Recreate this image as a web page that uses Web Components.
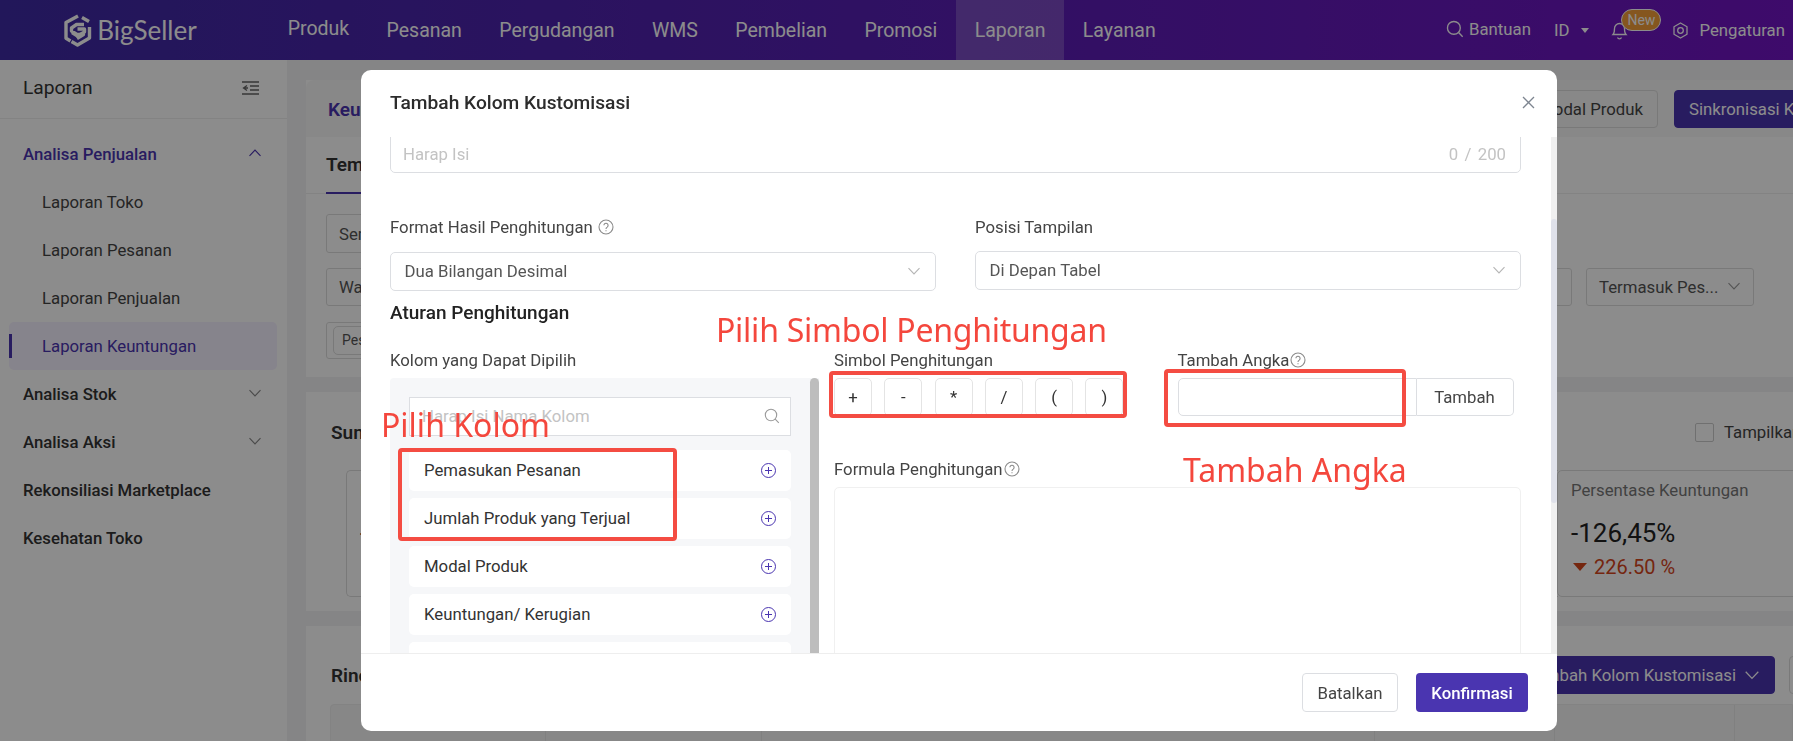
<!DOCTYPE html>
<html lang="id"><head><meta charset="utf-8"><title>BigSeller</title>
<style>
html,body{margin:0;height:100%;overflow:hidden;font-family:Roboto,"Liberation Sans",sans-serif;background:#f2f3f5}
</style></head><body>
<app-shell></app-shell>
<script>
const I={
 chev:(s=14,c='#b5b5b5')=>`<svg width="${s}" height="${s}" viewBox="0 0 14 14" fill="none" stroke="${c}" stroke-width="1.1"><path d="M1.5 4.2 7 10l5.5-5.8"/></svg>`,
 up:(s=14,c='#4a33b0')=>`<svg width="${s}" height="${s}" viewBox="0 0 14 14" fill="none" stroke="${c}" stroke-width="1.1"><path d="M1.5 9.8 7 4l5.5 5.8"/></svg>`,
 help:(s=16)=>`<svg width="${s}" height="${s}" viewBox="0 0 16 16" fill="none" stroke="#8b8b8b" stroke-width="1.1"><circle cx="8" cy="8" r="7"/><path d="M5.9 6.3a2.1 2.1 0 1 1 3.3 1.8c-.8.5-1.2.9-1.2 1.8"/><path d="M8 11.2v1.1"/></svg>`,
 search:(s=16,c='#999',w=1.2)=>`<svg width="${s}" height="${s}" viewBox="0 0 16 16" fill="none" stroke="${c}" stroke-width="${w}"><circle cx="7" cy="7" r="5.7"/><path d="m11.2 11.2 3.6 3.6"/></svg>`,
 plus:`<svg width="15" height="15" viewBox="0 0 15 15" fill="none" stroke="#4a35b0" stroke-width="1"><circle cx="7.5" cy="7.5" r="7"/><path d="M7.5 4v7M4 7.5h7"/></svg>`
};
const def=(name,html)=>customElements.define(name,class extends HTMLElement{constructor(){super();this.attachShadow({mode:'open'}).innerHTML=html}});

def('app-logo',`<style>:host{display:flex;align-items:center;gap:5px;color:#fff;font:400 26px Lato,Roboto,sans-serif}</style>
<svg width="29" height="33" viewBox="0 0 29 33" fill="none" stroke="#fff" stroke-width="3.4" stroke-linejoin="round"><path d="M15 2 3 8.6v15.6L7.5 27"/><path d="M19 3.5l7 4M26.5 13v11L14.5 31l-6-3.5"/><path d="M21 10.5h-7.5L8.5 14v3l5.500 3.500h6.500l-6.500 4"/><path d="M9 18.500l5.500 3.500 7-4v-3h-7"/></svg>
<span>BigSeller</span>`);

def('nav-item',`<style>:host{display:flex;align-items:center;height:60px;padding:0 18.700px;font-size:19.5px;color:#fff;box-sizing:border-box;white-space:nowrap}
:host([active]){background:rgba(255,255,255,.2)}span{position:relative;top:var(--dy,0)}</style><span><slot></slot></span>`);

def('app-header',`<style>:host{display:flex;align-items:center;height:60px;background:linear-gradient(90deg,#3e2aa4,#7114c3);color:#fff}
.logo{width:269px;display:flex;justify-content:center;padding-right:9px;box-sizing:border-box}
.nav{display:flex}.r{margin-left:auto;display:flex;align-items:center;font-size:16.75px;height:60px;white-space:nowrap;margin-right:8px}
.i{display:flex;align-items:center;gap:5px}.bell{position:relative;width:17px;height:20px;margin:0 44px 0 22px}
.new{position:absolute;left:10px;top:-11px;background:#f29d3a;border:1px solid #fff;border-radius:11px;font-size:14px;line-height:20px;padding:0 5px;height:22px;box-sizing:border-box}
.tri{display:inline-block;border:4px solid transparent;border-top:5px solid #fff;margin:5px 0 0 7px}
</style><div class="logo"><app-logo></app-logo></div>
<div class="nav"><nav-item style="--dy:-2px">Produk</nav-item><nav-item>Pesanan</nav-item><nav-item>Pergudangan</nav-item><nav-item>WMS</nav-item><nav-item>Pembelian</nav-item><nav-item>Promosi</nav-item><nav-item active>Laporan</nav-item><nav-item>Layanan</nav-item></div>
<div class="r"><span class="i" style="position:relative;top:-1px">${I.search(18,'#fff',1.2)}Bantuan</span><span class="i" style="margin-left:23px">ID<i class="tri"></i></span>
<span class="bell"><svg width="17" height="20" viewBox="0 0 17 20" fill="none" stroke="#fff" stroke-width="1.3"><path d="M2 14.500c1.500-1.500 1.500-3 1.500-6a5 5 0 0 1 10 0c0 3 0 4.500 1.500 6z"/><path d="M6.500 17.500a2.200 2.200 0 0 0 4 0"/></svg><span class="new">New</span></span>
<span class="i" style="gap:10px">${`<svg width="17" height="17" viewBox="0 0 17 17" fill="none" stroke="#fff" stroke-width="1.3" stroke-linejoin="round"><path d="M8.500 1 15 4.750v7.500L8.500 16 2 12.250v-7.500z"/><circle cx="8.500" cy="8.500" r="2.800"/></svg>`}Pengaturan</span></div>`);

def('side-item',`<style>:host{display:flex;align-items:center;height:48px;padding:0 25px 0 23px;font-size:16.75px;color:#333;font-weight:500;box-sizing:border-box;white-space:nowrap;justify-content:space-between}
:host([sub]){font-weight:400;padding-left:42px;color:#444}:host([open]){color:#4a33b0}
:host([active]){font-weight:400;color:#4a33b0;background:#f5f0ff;margin:0 10px 0 9px;padding-left:33px;border-radius:5px;position:relative}
:host([active])::before{content:"";position:absolute;left:0;top:12px;bottom:12px;width:3px;background:#4a33b0}</style><slot></slot><slot name="i"></slot>`);

def('side-nav',`<style>:host{display:block;width:287px;flex:none;background:#fff;height:681px}
.t{height:59px;display:flex;align-items:center;justify-content:space-between;padding:0 27px 3px 23px;font-size:19.2px;color:#333;border-bottom:1px solid #eee;box-sizing:border-box}
.m{padding-top:11px;display:block}</style>
<div class="t">Laporan<svg width="18" height="14" viewBox="0 0 18 14" fill="none" stroke="#666" stroke-width="1.300"><path d="M0 1h17M8 5h9M8 9h9M0 13h17"/><path d="M5 4.500 1.500 7 5 9.500M1.500 7H6"/></svg></div>
<div class="m"><side-item open>Analisa Penjualan<span slot="i">${I.up(14,'#4a33b0')}</span></side-item>
<side-item sub>Laporan Toko</side-item><side-item sub>Laporan Pesanan</side-item><side-item sub>Laporan Penjualan</side-item><side-item sub active>Laporan Keuntungan</side-item>
<side-item>Analisa Stok<span slot="i">${I.chev(14,'#888')}</span></side-item><side-item>Analisa Aksi<span slot="i">${I.chev(14,'#888')}</span></side-item><side-item>Rekonsiliasi Marketplace</side-item><side-item>Kesehatan Toko</side-item></div>`);

def('bg-box',`<style>:host{display:flex;align-items:center;justify-content:space-between;height:39px;border:1px solid #ddd;border-radius:3px;box-sizing:border-box;padding:0 12px;font-size:16.75px;color:#555;white-space:nowrap;overflow:hidden}</style><slot></slot><slot name="i"></slot>`);

def('report-page',`<style>:host{display:block;flex:1;min-width:0;height:681px;overflow:hidden;padding:20px 0 0 19px;box-sizing:border-box;background:#f2f3f5}
.card{background:#fff;margin-bottom:15px;overflow:hidden;position:relative}
.top{height:57px;background:#f8f8f8;display:flex;align-items:center;padding:0 0 0 22px;border-radius:8px 0 0 0;gap:16px}
.ttl{color:#4a33b0;font-weight:600;font-size:19px;margin-right:auto;position:relative;top:1px}
.btn{height:38px;display:flex;align-items:center;border:1px solid #ddd;border-radius:4px;padding:0 14px;font-size:16.75px;color:#444;box-sizing:border-box;white-space:nowrap}
.pri{background:#4a33b0;border-color:#4a33b0;color:#fff}
.tab{display:flex;height:57px;border-bottom:1px solid #eee;padding-left:20px;box-sizing:border-box}
.tab b{font-size:19px;font-weight:600;color:#333;line-height:56px;border-bottom:2px solid #4a33b0;height:55px;width:130px}
.f{padding:20px 39px 20px 20px;height:183px;box-sizing:border-box}
.fr{display:flex;gap:14px;margin-top:15px}.fr bg-box{width:168px}
.tag{width:200px;height:37px;border:1px solid #ddd;border-radius:3px;padding:3px 6px;box-sizing:border-box;margin-top:16px}
.tag span{display:inline-block;border:1px solid #ddd;border-radius:5px;height:29px;line-height:27px;padding:0 8px;box-sizing:border-box;font-size:14px;color:#555}
h3{margin:0;font-size:19px;font-weight:600;color:#333}
.s{height:219px;padding:30px 0 0 25px;box-sizing:border-box}
.hr{display:flex;justify-content:space-between;align-items:center;height:20px}
.chk{display:flex;align-items:center;gap:10px;font-size:16.75px;color:#444;width:98px;white-space:nowrap}
.chk i{width:19px;height:19px;border:1px solid #ccc;border-radius:2px;box-sizing:border-box;flex:none}
.st{display:flex;margin:28px 0 0 15px;height:127px}
.bx{border:1px solid #ddd;border-radius:5px 0 0 5px;box-sizing:border-box;padding:9px 13px;flex:0 0 260px;height:127px;margin-right:-24px;margin-left:-1px}
.bx:first-child{flex:1;margin:0;border-right:0}
.lb{font-size:16.75px;color:#777;line-height:20px}.v{font-size:26px;color:#222;line-height:28px;margin-top:19px}.d{display:flex;align-items:center;gap:7px;font-size:20px;color:#d5451b;margin-top:6px;line-height:28px}
.d i{border:7px solid transparent;border-top:8px solid #d5451b;border-bottom:0;margin-left:2px}
.r .hr{height:38px;margin-top:-2px}.r{padding:32px 0 0 25px;height:140px;box-sizing:border-box}
.tb{display:flex;height:60px;margin:10px 0 0 -1px;background:#f6f6f6;border:1px solid #eee;border-radius:4px 0 0 0;box-sizing:border-box}
.tb i{border-right:1px solid #e9e9e9;flex:none;box-sizing:border-box}
</style>
<div class="card"><div class="top"><span class="ttl">Keuntungan</span><span class="btn">Modal Produk</span><span class="btn pri" style="width:219px;margin-right:-100px">Sinkronisasi Keuntungan</span></div>
<div class="tab"><b>Template</b></div>
<div class="f"><bg-box style="width:200px">Semua</bg-box>
<div class="fr"><bg-box style="width:1246px;height:38px">Waktu</bg-box><bg-box style="height:38px">Termasuk Pes...<span slot="i">${I.chev(14,'#999')}</span></bg-box></div>
<div class="tag"><span>Pesanan</span></div></div></div>
<div class="card"><div class="s"><div class="hr"><h3>Summary</h3><span class="chk"><i></i>Tampilkan</span></div>
<div class="st"><div class="bx"><div class="lb">Pemasukan</div><div class="v">-</div></div><div class="bx"><div class="lb">Persentase Keuntungan</div><div class="v">-126,45%</div><div class="d"><i></i>226.50 %</div></div></div></div></div>
<div class="card" style="margin:0"><div class="r"><div class="hr"><h3>Rincian</h3><span style="display:flex;gap:14px;margin-right:-26px"><span class="btn pri" style="gap:8px">Tambah Kolom Kustomisasi ${I.chev(16,'#fff')}</span><span class="btn" style="width:30px"></span></span></div>
<div class="tb"><i style="width:215px"></i><i style="width:216px"></i><i style="width:613px"></i><i style="width:180px"></i><i style="width:180px"></i></div></div></div>`);

def('field-box',`<style>:host{display:flex;align-items:center;justify-content:space-between;height:39px;border:1px solid #dcdee2;border-radius:5px;box-sizing:border-box;padding:0 14px 2px 12px;font-size:16.75px;background:#fff;color:#555;white-space:nowrap}
:host([ph]){color:#c3c3c3}:host([sel]){padding-left:13.5px}::slotted([slot=i]){display:flex}</style><slot></slot><slot name="i"></slot>`);

def('col-row',`<style>:host{display:flex;align-items:center;justify-content:space-between;height:41px;background:#fff;border-radius:5px;padding:0 15px 0;font-size:16.75px;color:#333;white-space:nowrap;margin-bottom:7px;flex:none;line-height:39px}::slotted(span){display:flex}</style><slot></slot><slot name="i"></slot>`);

def('sym-btn',`<style>:host{display:flex;align-items:center;justify-content:center;width:38px;height:38px;border:1px solid #e4e4e4;border-radius:5px;box-sizing:border-box;font-size:16.75px;color:#333}</style><slot></slot>`);

def('col-panel',`<style>:host{display:flex;width:429px;height:420px;background:#f6f7f9;border-radius:4px 0 0 0;overflow:hidden}
.l{flex:1;padding:19px 19px 0;min-width:0;display:flex;flex-direction:column}
.sb{width:9px;background:#bdbdbd;border-radius:5px 5px 0 0;flex:none}
field-box{border-radius:0;margin-bottom:14px;flex:none;padding-right:10px}</style>
<div class="l"><field-box ph>Harap Isi Nama Kolom<span slot="i">${I.search(16,'#9a9a9a',1.1)}</span></field-box>
<col-row>Pemasukan Pesanan<span slot="i">${I.plus}</span></col-row><col-row>Jumlah Produk yang Terjual<span slot="i">${I.plus}</span></col-row><col-row>Modal Produk<span slot="i">${I.plus}</span></col-row><col-row>Keuntungan/ Kerugian<span slot="i">${I.plus}</span></col-row><col-row></col-row></div><div class="sb"></div>`);

def('custom-dialog',`<style>:host{position:fixed;left:361px;top:70px;width:1196px;height:661px;background:#fff;border-radius:10px;display:flex;flex-direction:column;overflow:hidden;color:#333;font-size:16.75px}
.h{height:67px;flex:none;display:flex;align-items:center;justify-content:space-between;padding:0 22px 3px 29px;box-sizing:border-box;font-size:19.2px;font-weight:500;color:#2c2c2c}
.main{flex:1;min-height:0;display:flex}
.b{flex:1;overflow:hidden;padding:0 30px 0 29px;min-width:0}
.scr{width:6px;background:#f0f0f0;flex:none}.scr i{display:block;width:6px;height:284px;margin-top:82px;background:#dfe1ea;border-radius:3px}
.ft{height:78px;flex:none;border-top:1px solid #eee;box-sizing:border-box;display:flex;align-items:center;justify-content:flex-end;gap:18px;padding:0 29px 0 0}
.btn{height:39px;display:flex;align-items:center;justify-content:center;border-radius:4px;box-sizing:border-box;font-size:16.75px}
.c{width:96px;border:1px solid #dcdee2;color:#444}.o{width:112px;background:#4a35b0;color:#fff;font-weight:500}
.top{margin-top:-20px}
.g{display:grid;grid-template-columns:546px 546px;gap:39px;margin-top:43px}
.lb{line-height:22px;height:22px;display:flex;align-items:center;gap:5px;color:#444;white-space:nowrap}
.g field-box{margin-top:14px}
h4{margin:11px 0 0;font-size:19px;font-weight:500;line-height:22px;color:#222}
.rule{display:flex;gap:15px;margin-top:25px}
.rule>div{flex:1;min-width:0}
.syms{display:flex;gap:12.300px;margin-top:7px}
.two{display:flex}.two>div:first-child{width:343.500px}
.add{display:flex;margin-top:7px;width:336px}.add i{width:239px;height:38px;border:1px solid #dcdee2;border-radius:5px 0 0 5px;box-sizing:border-box}
.add span{flex:1;height:38px;border:1px solid #dcdee2;border-left:0;border-radius:0 5px 5px 0;display:flex;align-items:center;justify-content:center;box-sizing:border-box;color:#444}
.form{height:300px;border:1px solid #f0f0f0;border-radius:5px;margin-top:7px;box-sizing:border-box}
</style>
<div class="h">Tambah Kolom Kustomisasi<svg width="13" height="13" viewBox="0 0 13 13" fill="none" stroke="#7d8590" stroke-width="1.300"><path d="M1 1l11 11M12 1 1 12"/></svg></div>
<div class="main"><div class="b">
<field-box ph class="top" style="height:56px;align-items:flex-end;padding-bottom:8px">Harap Isi<span slot="i" style="word-spacing:-1px">0&nbsp; / &nbsp;200</span></field-box>
<div class="g"><div><div class="lb">Format Hasil Penghitungan ${I.help(16)}</div><field-box sel>Dua Bilangan Desimal<span slot="i">${I.chev(14)}</span></field-box></div>
<div><div class="lb">Posisi Tampilan</div><field-box sel style="margin-top:13px">Di Depan Tabel<span slot="i">${I.chev(14)}</span></field-box></div></div>
<h4>Aturan Penghitungan</h4>
<div class="rule"><div style="flex:0 0 429px"><div class="lb">Kolom yang Dapat Dipilih</div><col-panel style="margin-top:7px"></col-panel></div>
<div><div class="two"><div><div class="lb">Simbol Penghitungan</div><div class="syms"><sym-btn>+</sym-btn><sym-btn>-</sym-btn><sym-btn>*</sym-btn><sym-btn>/</sym-btn><sym-btn>(</sym-btn><sym-btn>)</sym-btn></div></div>
<div><div class="lb" style="gap:1px">Tambah Angka${I.help(16)}</div><div class="add"><i></i><span>Tambah</span></div></div></div>
<div class="lb" style="margin-top:42px;gap:1px">Formula Penghitungan${I.help(16)}</div><div class="form"></div></div></div>
</div><div class="scr"><i></i></div></div>
<div class="ft"><span class="btn c">Batalkan</span><span class="btn o">Konfirmasi</span></div>`);

def('note-mark',`<style>:host{position:fixed;display:block;box-sizing:border-box;color:#f4473d;font:400 32px/44px "Noto Sans","Open Sans",sans-serif;white-space:nowrap}
:host([box]){border:4px solid #f44c42;border-radius:4px}</style><slot></slot>`);

def('app-shell',`<style>:host{display:block;width:1793px;height:741px;position:relative;overflow:hidden}
.row{display:flex;height:681px}.ov{position:fixed;inset:0;background:rgba(0,0,0,.45)}</style>
<app-header></app-header><div class="row"><side-nav></side-nav><report-page></report-page></div><div class="ov"></div>
<custom-dialog></custom-dialog>
<note-mark style="left:716px;top:308px;letter-spacing:-.25px">Pilih Simbol Penghitungan</note-mark>
<note-mark style="left:381px;top:403px">Pilih Kolom</note-mark>
<note-mark style="left:1183px;top:448px">Tambah Angka</note-mark>
<note-mark box style="left:398px;top:448px;width:279px;height:93px"></note-mark>
<note-mark box style="left:829px;top:371px;width:298px;height:47px"></note-mark>
<note-mark box style="left:1164px;top:369px;width:242px;height:58px"></note-mark>`);
</script></body></html>
